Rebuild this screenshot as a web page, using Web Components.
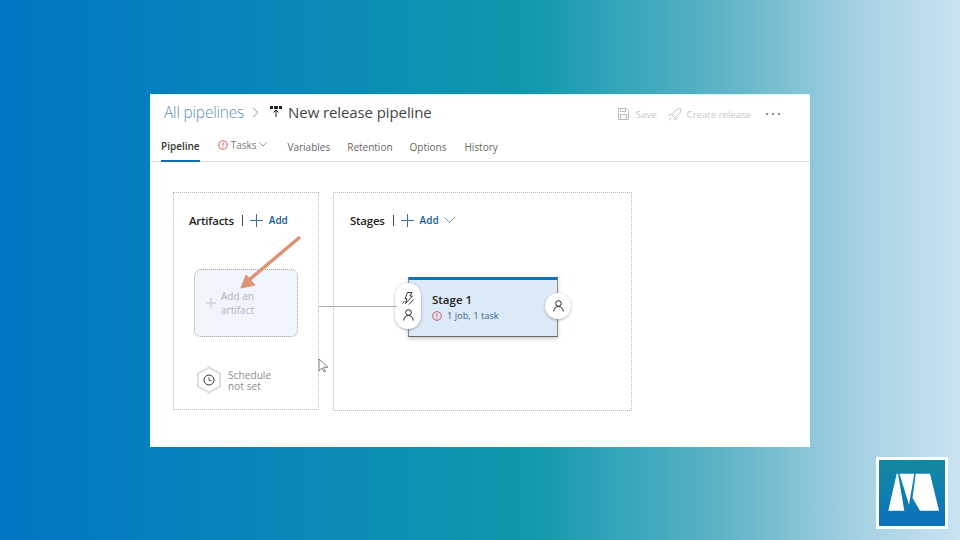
<!DOCTYPE html>
<html>
<head>
<meta charset="utf-8">
<style>
  html, body { margin: 0; height: 100%; }
  body {
    width: 960px; height: 540px; overflow: hidden; position: relative;
    background: linear-gradient(90deg, #0176c4 0%, #0a86ba 28%, #1098ac 55%, #5db3c6 75%, #a6d2e3 90%, #cae2f2 100%);
    font-family: "Open Sans", "Noto Sans", sans-serif;
  }
</style>
</head>
<body>
<slide-view></slide-view>

<script>
class PipelineHeader extends HTMLElement {
    constructor() {
        super();
        this.shadow = this.attachShadow({mode: 'open'});
        this.shadow.innerHTML = `
        <style>
            :host { display: block; height: 68px; border-bottom: 1px solid #dcdcdc; box-sizing: border-box; }
            .top { display: flex; align-items: center; height: 36px; padding: 0 0 0 14px; }
            .crumb { font-size: 15.5px; color: #5b8fb0; font-weight: 300; letter-spacing: -.2px; }
            .sep { margin: 0 11px 0 8px; display: flex; }
            .title { font-size: 15px; color: #444; margin-left: 6px; letter-spacing: -.1px; }
            .actions { margin-left: auto; display: flex; align-items: center; color: #c9c9c9; font-size: 9.600px; padding: 4px 30px 0 0; }
            .actions svg { display: block; }
            .save { margin: 0 11px 0 7px; }
            .create { margin: 0 15px 0 5px; }
            .more { display: flex; gap: 4px; }
            .more i { width: 2px; height: 2px; background: #888; display: block; }
            .tabs { display: flex; height: 32px; padding-left: 11px; font-size: 10px; color: #666; }
            .tab { display: flex; align-items: center; gap: 3px; margin-right: 17px; height: 30px; padding-top: 3px; box-sizing: border-box; }
            .tab.on { color: #333; font-weight: 600; border-bottom: 2px solid #0f6cb0; height: 32px; padding-top: 2px; margin-right: 18px; }
            .tab.err { color: #777; padding: 0 0 1px; margin-right: 20px; }
            .tab.opt { margin-right: 18px; }
        </style>
        <div class="top">
            <span class="crumb">All pipelines</span>
            <span class="sep"><svg width="7" height="11" viewBox="0 0 7 11"><path d="M1 1l5 4.500-5 4.500" fill="none" stroke="#999" stroke-width="1"/></svg></span>
            <svg width="12" height="12" viewBox="0 0 12 12"><path d="M0 0h3v3H0zM4 0h4v3H4zM9 0h3v3H9z" fill="#222"/><path d="M6 11V4M3.500 6.500 6 4l2.500 2.500" fill="none" stroke="#222" stroke-width="1"/></svg>
            <span class="title">New release pipeline</span>
            <div class="actions">
                <svg width="11" height="12" viewBox="0 0 11 12"><path d="M.5.500h8l2 2v9H.5zM2.500.500v3h5v-3M2.500 11.500v-5h6v5" fill="none" stroke="#bbb"/></svg>
                <span class="save">Save</span>
                <svg width="14" height="13" viewBox="0 0 14 13"><path d="M5 8l-1.500-1.500L8 2c1.500-1.200 3.500-1.500 5-1.500 0 1.500-.3 3.500-1.500 5L7 10zM3.500 6.500H1.500L0 8.500M7 10v2l2-1.500M3 9.500l-2 3" fill="none" stroke="#c4c4c4"/></svg>
                <span class="create">Create release</span>
                <span class="more"><i></i><i></i><i></i></span>
            </div>
        </div>
        <div class="tabs">
            <span class="tab on">Pipeline</span>
            <span class="tab err"><svg width="10" height="10" viewBox="0 0 10 10"><circle cx="5" cy="5" r="4.300" fill="none" stroke="#d8565a"/><path d="M5 2.500v3M5 6.500v1" stroke="#d8565a"/></svg> Tasks <svg width="8" height="5" viewBox="0 0 8 5"><path d="M.5.500 4 4 7.500.500" fill="none" stroke="#999"/></svg></span>
            <span class="tab">Variables</span>
            <span class="tab">Retention</span>
            <span class="tab opt">Options</span>
            <span class="tab">History</span>
        </div>
        `;
    }
}

class PanelHead extends HTMLElement {
    constructor() {
        super();
        this.shadow = this.attachShadow({mode: 'open'});
        this.shadow.innerHTML = `
        <style>
            :host { display: flex; align-items: center; height: 14px; font-size: 11.400px; color: #222; }
            .name { font-weight: 600; letter-spacing: -.2px; }
            .bar { width: 1px; height: 11px; background: #444; margin: 0 7px 0 8px; }
            .add { color: #12608f; font-size: 10px; font-weight: 600; margin-left: 6px; }
            svg { display: block; }
            .chev { margin-left: 5px; }
        </style>
        <span class="name"><slot></slot></span>
        <span class="bar"></span>
        <svg width="13" height="13" viewBox="0 0 13 13"><path d="M6.500 0v13M0 6.500h13" stroke="#3f7396" stroke-width="1"/></svg>
        <span class="add">Add</span>
        <svg class="chev" width="11" height="6" viewBox="0 0 11 6" style="display:${this.hasAttribute('chevron') ? 'block' : 'none'}"><path d="M.5.500l5 5 5-5" fill="none" stroke="#7790a0"/></svg>
        `;
    }
}

class ArtifactsPanel extends HTMLElement {
    constructor() {
        super();
        this.shadow = this.attachShadow({mode: 'open'});
        this.shadow.innerHTML = `
        <style>
            :host { display: flex; flex-direction: column; width: 146px; height: 218px; box-sizing: border-box; border: 1px dotted #b8b8b8; padding: 20px 0 0 15px; }
            .card { margin: 42px 0 0 5px; width: 104px; height: 68px; box-sizing: border-box; background: #eff5fb; border: 1px dotted #a0a0a0; border-radius: 7px; display: flex; align-items: center; padding-left: 11px; gap: 5px; color: #b0b4b8; font-size: 10px; line-height: 14px; }
            .card svg { display: block; }
            .sched { display: flex; align-items: center; margin: 29px 0 0 7px; gap: 6px; font-size: 10px; line-height: 11px; color: #8c8c8c; letter-spacing: .1px; }
            .sched span { padding-top: 1px; }
            .sched svg { display: block; }
        </style>
        <panel-head>Artifacts</panel-head>
        <div class="card">
            <svg width="10" height="10" viewBox="0 0 10 10"><path d="M5 0v10M0 5h10" stroke="#c2c5c8"/></svg>
            <span>Add an<br>artifact</span>
        </div>
        <div class="sched">
            <svg width="26" height="28" viewBox="0 0 26 28">
                <path d="M13 1.500 24 7.500v13L13 26.500 2 20.500v-13z" fill="#fff" stroke="#dedede" stroke-width="2"/>
                <circle cx="13" cy="14" r="5" fill="none" stroke="#333"/>
                <path d="M13 11v3.500h2.500" fill="none" stroke="#333" stroke-width=".8"/>
            </svg>
            <span>Schedule<br>not set</span>
        </div>
        `;
    }
}

class StageCard extends HTMLElement {
    constructor() {
        super();
        this.shadow = this.attachShadow({mode: 'open'});
        const person = `<svg width="11" height="12" viewBox="0 0 11 12"><circle cx="5.500" cy="3.500" r="2.800" fill="none" stroke="#222"/><path d="M.7 11.500c.3-3 2-5 4.800-5s4.500 2 4.800 5" fill="none" stroke="#222"/></svg>`;
        this.shadow.innerHTML = `
        <style>
            :host { position: absolute; left: 74px; top: 84px; width: 150px; height: 60px; box-sizing: border-box; background: #dce9f6; border-top: 3px solid #0f74bd; border-bottom: 1px solid #666; border-left: 1px solid #888; border-right: 1px solid #888; box-shadow: 0 2px 4px rgba(0,0,0,.2); padding: 13px 0 0 23px; }
            .name { font-size: 11.500px; font-weight: 600; color: #222; line-height: 14px; }
            .meta { display: flex; align-items: center; gap: 5px; font-size: 9.300px; color: #2f6690; margin-top: 3px; line-height: 12px; }
            .meta svg { display: block; }
            .pill { position: absolute; background: #fff; box-shadow: 0 1px 3px rgba(0,0,0,.3); display: flex; flex-direction: column; align-items: center; justify-content: center; }
            .pre { left: -14px; top: 3px; width: 26px; height: 46px; border-radius: 13px; gap: 4px; }
            .post { right: -14px; top: 13px; width: 26px; height: 26px; border-radius: 50%; }
            .pill svg { display: block; }
        </style>
        <div class="name">Stage 1</div>
        <div class="meta"><svg width="10" height="10" viewBox="0 0 10 10"><circle cx="5" cy="5" r="4.300" fill="none" stroke="#d8565a"/><path d="M5 2.500v3M5 6.500v1" stroke="#d8565a"/></svg><span>1 job, 1 task</span></div>
        <div class="pill pre">
            <svg width="12" height="13" viewBox="0 0 12 13"><path d="M5.500.500H10L7.800 4H10.500L3.500 11.500 5 6.800H3z" fill="none" stroke="#222" stroke-width=".9"/><path d="M.5 11.500l2-2.500M7 12.500l4.500-5" fill="none" stroke="#222" stroke-width=".9"/></svg>
            ${person}
        </div>
        <div class="pill post">${person}</div>
        `;
    }
}

class StagesPanel extends HTMLElement {
    constructor() {
        super();
        this.shadow = this.attachShadow({mode: 'open'});
        this.shadow.innerHTML = `
        <style>
            :host { display: block; position: relative; width: 299px; height: 219px; box-sizing: border-box; border: 1px dotted #b8b8b8; padding: 20px 0 0 16px; }
        </style>
        <panel-head chevron>Stages</panel-head>
        <stage-card></stage-card>
        `;
    }
}

class PipelineWindow extends HTMLElement {
    constructor() {
        super();
        this.shadow = this.attachShadow({mode: 'open'});
        this.shadow.innerHTML = `
        <style>
            :host { display: block; position: absolute; left: 150px; top: 94px; width: 660px; height: 353px; background: #fff; box-shadow: inset 0 1px 0 #dff6f8; }
            .canvas { display: flex; gap: 14px; padding: 30px 0 0 23px; position: relative; }
            .link { position: absolute; left: 169px; top: 144px; width: 78px; height: 1px; background: #aaa; }
            svg.over { position: absolute; left: 0; top: 0; pointer-events: none; }
        </style>
        <pipeline-header></pipeline-header>
        <div class="canvas">
            <artifacts-panel></artifacts-panel>
            <stages-panel></stages-panel>
            <div class="link"></div>
        </div>
        <svg class="over" width="660" height="353" viewBox="0 0 660 353">
            <path d="M150 143 99 186" stroke="#df9375" stroke-width="3.500" fill="none"/>
            <path d="M91 194 96 181 105 191z" fill="#df9375" stroke="#df9375"/>
            <path d="M169 265v12l3-3 2 4 1.500-.7-2-4h4.500z" fill="#fff" stroke="#666" stroke-width=".8"/>
        </svg>
        `;
    }
}

class BrandLogo extends HTMLElement {
    constructor() {
        super();
        this.shadow = this.attachShadow({mode: 'open'});
        this.shadow.innerHTML = `
        <style>
            :host { display: block; position: absolute; left: 876px; top: 457px; width: 72px; height: 72px; box-sizing: border-box; border: 3px solid #fff; background: linear-gradient(180deg, #13889f 0%, #0f7fb0 50%, #0a70bc 100%); }
            svg { display: block; }
        </style>
        <svg width="66" height="66" viewBox="0 0 66 66"><path d="M17.700 13.700 9.300 50.700H25.300L19 13.700zM20.500 13.700H35.300L30 44.700zM36.700 13.700H51L60 50.700H41L33.500 38z" fill="#fff"/></svg>
        `;
    }
}

class SlideView extends HTMLElement {
    constructor() {
        super();
        this.shadow = this.attachShadow({mode: 'open'});
        this.shadow.innerHTML = `
        <style>:host { display: block; }</style>
        <pipeline-window></pipeline-window>
        <brand-logo></brand-logo>
        `;
    }
}

customElements.define('pipeline-header', PipelineHeader);
customElements.define('panel-head', PanelHead);
customElements.define('artifacts-panel', ArtifactsPanel);
customElements.define('stage-card', StageCard);
customElements.define('stages-panel', StagesPanel);
customElements.define('pipeline-window', PipelineWindow);
customElements.define('brand-logo', BrandLogo);
customElements.define('slide-view', SlideView);
</script>
</body>
</html>
